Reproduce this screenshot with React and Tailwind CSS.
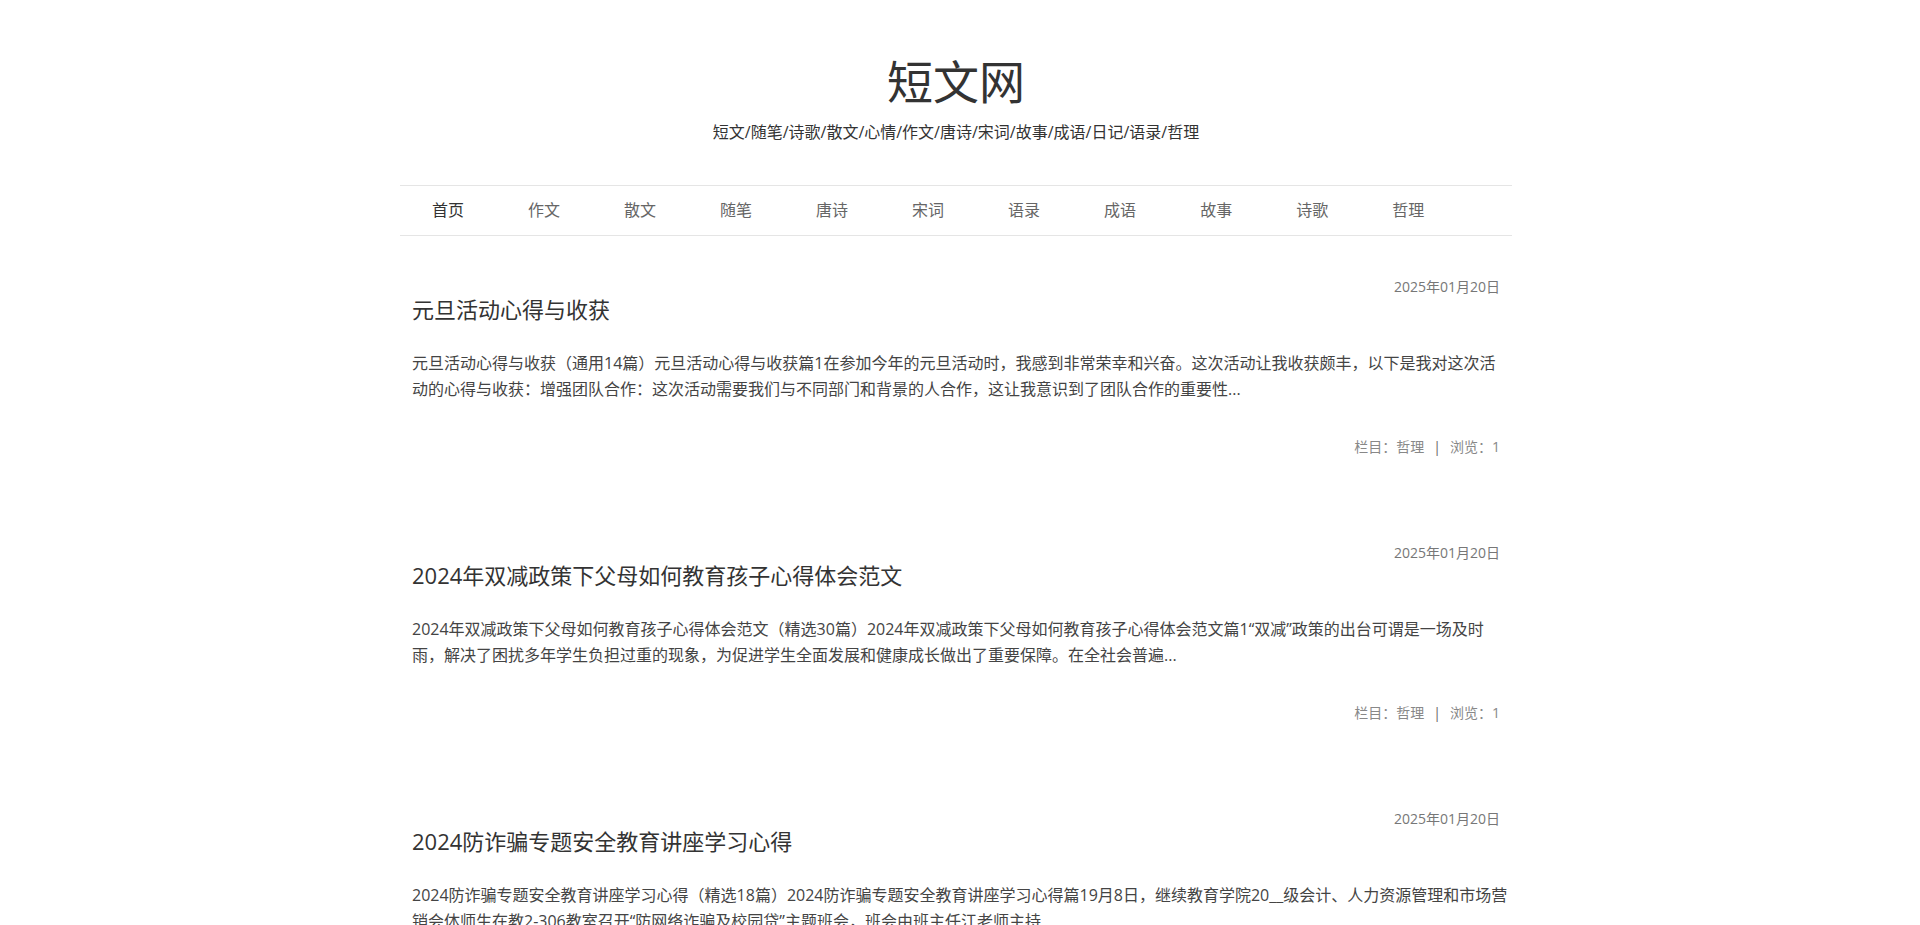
import React from "react";

const navItems = ["首页", "作文", "散文", "随笔", "唐诗", "宋词", "语录", "成语", "故事", "诗歌", "哲理"];

const articles = [
  {
    title: "元旦活动心得与收获",
    date: "2025年01月20日",
    summary:
      "元旦活动心得与收获（通用14篇）元旦活动心得与收获篇1在参加今年的元旦活动时，我感到非常荣幸和兴奋。这次活动让我收获颇丰，以下是我对这次活动的心得与收获：增强团队合作：这次活动需要我们与不同部门和背景的人合作，这让我意识到了团队合作的重要性...",
    column: "哲理",
    views: 1,
  },
  {
    title: "2024年双减政策下父母如何教育孩子心得体会范文",
    date: "2025年01月20日",
    summary:
      "2024年双减政策下父母如何教育孩子心得体会范文（精选30篇）2024年双减政策下父母如何教育孩子心得体会范文篇1“双减”政策的出台可谓是一场及时雨，解决了困扰多年学生负担过重的现象，为促进学生全面发展和健康成长做出了重要保障。在全社会普遍...",
    column: "哲理",
    views: 1,
  },
  {
    title: "2024防诈骗专题安全教育讲座学习心得",
    date: "2025年01月20日",
    summary:
      "2024防诈骗专题安全教育讲座学习心得（精选18篇）2024防诈骗专题安全教育讲座学习心得篇19月8日，继续教育学院20__级会计、人力资源管理和市场营销会体师生在教2-306教室召开“防网络诈骗及校园贷”主题班会，班会由班主任江老师主持...",
    column: "哲理",
    views: 1,
  },
  {
    title: "寒假社会实践心得体会",
    date: "2025年01月19日",
    summary:
      "寒假社会实践心得体会（通用15篇）寒假社会实践心得体会篇1寒假期间，我参加了社区组织的志愿服务活动，在活动中我学到了很多课堂上学不到的东西，也让我明白了责任与担当的意义...",
    column: "哲理",
    views: 2,
  },
  {
    title: "读书使人进步的心得感悟",
    date: "2025年01月19日",
    summary:
      "读书使人进步的心得感悟（精选12篇）读书使人进步的心得感悟篇1书籍是人类进步的阶梯，每当我翻开一本好书，就仿佛打开了一扇通往新世界的大门，让我看到了更广阔的天地...",
    column: "哲理",
    views: 3,
  },
  {
    title: "关于坚持的人生哲理短文",
    date: "2025年01月18日",
    summary:
      "关于坚持的人生哲理短文（通用10篇）关于坚持的人生哲理短文篇1人生就像一场马拉松，重要的不是起跑时的速度，而是能否坚持跑到终点。很多时候，成功就在于多坚持一下...",
    column: "哲理",
    views: 2,
  },
];

function Article({ item }) {
  return (
    <article className="px-3">
      <div className="text-right text-sm leading-5 text-[#777]">{item.date}</div>
      <h2 className="text-[22px] leading-[25px] text-[#333]">{item.title}</h2>
      <p className="-mr-2 mt-[28px] text-base leading-[26px] text-[#444]">{item.summary}</p>
      <div className="mt-[35px] text-right text-sm leading-5 text-[#888]">
        栏目：{item.column}
        <span className="mx-[9px] text-[#666]">|</span>
        浏览：{item.views}
      </div>
    </article>
  );
}

export default function App() {
  return (
    <div className="min-h-screen bg-white pr-[8px] font-['Open_Sans','Noto_Sans_CJK_SC',sans-serif]">
      <div className="mx-auto w-[1112px]">
        {/* header */}
        <header className="pt-[58px] text-center">
          <h1 className="text-[46px] leading-none text-[#333]">短文网</h1>
          <p className="mt-[17px] text-base leading-[22px] text-[#333]">
            短文/随笔/诗歌/散文/心情/作文/唐诗/宋词/故事/成语/日记/语录/哲理
          </p>
        </header>

        {/* nav */}
        <nav className="mt-[42px] border-y border-[#e5e5e5]">
          <ul className="flex">
            {navItems.map((name, idx) => (
              <li key={name}>
                <a
                  href="#"
                  className={
                    idx === 0
                      ? "block px-8 text-base leading-[49px] text-[#333]"
                      : "block px-8 text-base leading-[49px] text-[#666]"
                  }
                >
                  {name}
                </a>
              </li>
            ))}
          </ul>
        </nav>

        {/* list */}
        <main className="flex flex-col gap-[86px] pt-[41px] pb-20">
          {articles.map((item) => (
            <Article key={item.title} item={item} />
          ))}
        </main>

        <footer className="border-t border-[#e5e5e5] py-8 text-center text-sm text-[#888]">
          Copyright © 2025 短文网 版权所有
        </footer>
      </div>
    </div>
  );
}
